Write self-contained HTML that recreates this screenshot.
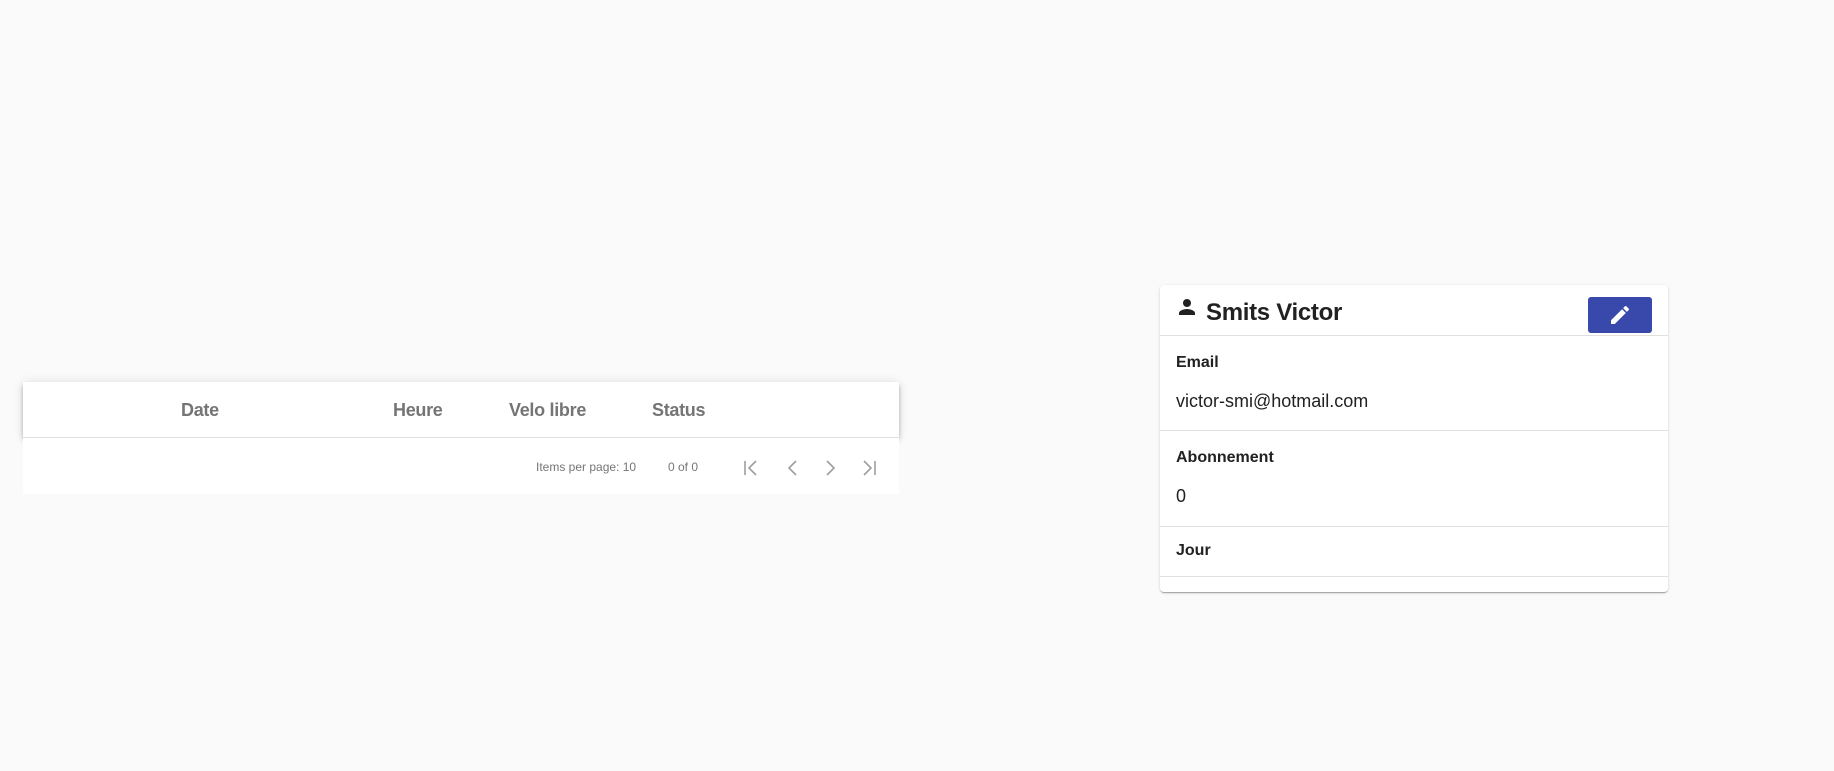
<!DOCTYPE html>
<html><head><meta charset="utf-8">
<style>
html,body{margin:0;padding:0;width:1834px;height:771px;background:#fafafa;font-family:"Liberation Sans",sans-serif;overflow:hidden;position:relative}
.abs{position:absolute}
.thead{left:23px;top:382px;width:876px;height:55px;background:#fff;box-shadow:0 2px 4px -1px rgba(0,0,0,.2),0 4px 5px rgba(0,0,0,.14),0 1px 10px rgba(0,0,0,.12);z-index:2}
.tfoot{left:23px;top:437px;width:876px;height:57px;background:#fff;border-top:1px solid #e0e0e0;box-sizing:border-box;z-index:3}
.th{position:absolute;top:18px;font-size:18px;color:#757575;font-weight:bold;letter-spacing:-0.3px}
.pg{position:absolute;font-size:12px;color:#757575;top:22px}
.card{left:1160px;top:285px;width:508px;height:307px;background:#fff;border-radius:4px;box-shadow:0 2px 1px -1px rgba(0,0,0,.2),0 1px 1px rgba(0,0,0,.14),0 1px 3px rgba(0,0,0,.12)}
.hr{position:absolute;left:0;width:508px;height:1px;background:#e0e0e0}
.lbl{position:absolute;left:16px;font-size:16px;font-weight:600;color:#212121}
.val{position:absolute;left:16px;font-size:18px;color:#212121}
</style></head><body>
<div class="abs thead">
  <div class="th" style="left:158px">Date</div>
  <div class="th" style="left:370px">Heure</div>
  <div class="th" style="left:486px">Velo libre</div>
  <div class="th" style="left:629px">Status</div>
</div>
<div class="abs tfoot">
  <div class="pg" style="left:513px">Items per page: 10</div>
  <div class="pg" style="left:645px">0 of 0</div>
  <svg class="abs" style="left:716px;top:18px" width="170" height="24" viewBox="0 0 170 24" fill="none" stroke="#9e9e9e" stroke-width="1.6">
    <path d="M6 5v14M17 5l-7 7 7 7"/>
    <path d="M57 5l-7 7 7 7"/>
    <path d="M88 5l7 7-7 7"/>
    <path d="M125 5l7 7-7 7M136 5v14"/>
  </svg>
</div>
<div class="abs card">
  <svg class="abs" style="left:15px;top:10px" width="24" height="24" viewBox="0 0 24 24"><path fill="#212121" d="M12 12c2.21 0 4-1.79 4-4s-1.79-4-4-4-4 1.79-4 4 1.79 4 4 4zm0 2c-2.67 0-8 1.34-8 4v2h16v-2c0-2.66-5.33-4-8-4z"/></svg>
  <div class="abs" style="left:46px;top:14px;font-size:24px;font-weight:bold;color:#212121;letter-spacing:-0.3px">Smits Victor</div>
  <div class="abs" style="left:428px;top:12px;width:64px;height:36px;background:#3949ab;border-radius:3px">
    <svg class="abs" style="left:20px;top:6px" width="24" height="24" viewBox="0 0 24 24"><path fill="#fff" d="M3 17.25V21h3.75L17.81 9.94l-3.75-3.75L3 17.25zM20.71 7.04a1 1 0 000-1.41l-2.34-2.34a1 1 0 00-1.41 0l-1.83 1.83 3.75 3.75 1.83-1.83z"/></svg>
  </div>
  <div class="hr" style="top:50px"></div>
  <div class="lbl" style="top:69px">Email</div>
  <div class="val" style="top:106px">victor-smi@hotmail.com</div>
  <div class="hr" style="top:145px"></div>
  <div class="lbl" style="top:164px">Abonnement</div>
  <div class="val" style="top:201px">0</div>
  <div class="hr" style="top:241px"></div>
  <div class="lbl" style="top:257px">Jour</div>
  <div class="hr" style="top:291px"></div>
</div>
</body></html>
